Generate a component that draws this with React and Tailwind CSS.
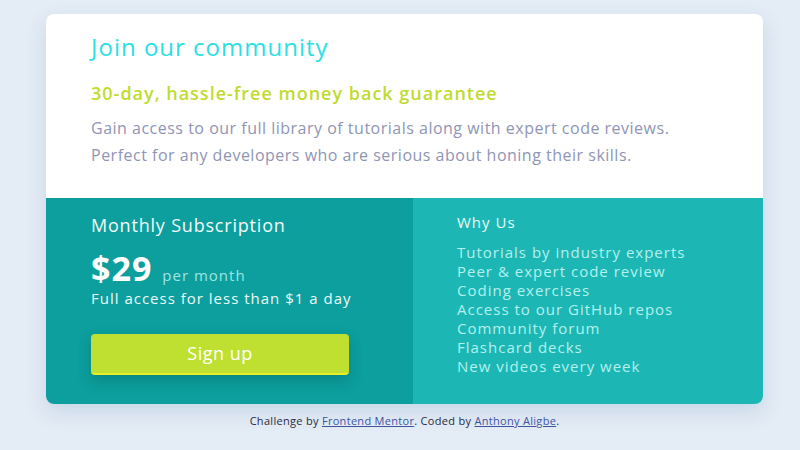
export default function App() {
  const reasons = [
    "Tutorials by industry experts",
    "Peer & expert code review",
    "Coding exercises",
    "Access to our GitHub repos",
    "Community forum",
    "Flashcard decks",
    "New videos every week",
  ]

  return (
    <div
      className="min-h-[450px] bg-[#e4ecf5] pt-[14px] pl-[9px] flex flex-col items-center"
      style={{ fontFamily: '"Open Sans", "Noto Sans", sans-serif' }}
    >
      <main className="w-[717px] rounded-lg overflow-hidden bg-white shadow-[0_8px_20px_rgba(74,120,170,0.18)]">
        <section className="px-[45px] pt-[17px] pb-[29px]">
          <h1 className="text-[24px] leading-8 font-medium tracking-[1px] text-[#2ae0e4]">Join our community</h1>
          <h2 className="mt-[18px] text-[18px] leading-6 font-semibold tracking-[1px] text-[#bfdb2f]">
            30-day, hassle-free money back guarantee
          </h2>
          <p className="mt-[10px] text-[16px] leading-[27px] tracking-[0.5px] text-[#8f95b5]">
            Gain access to our full library of tutorials along with expert code reviews.
            <br />
            Perfect for any developers who are serious about honing their skills.
          </p>
        </section>
        <div className="grid grid-cols-[367px_1fr]">
          <section className="bg-[#0c9f9d] px-[45px] pt-[15px] pb-[28px] text-white">
            <h3 className="text-[18px] leading-6 font-medium tracking-[0.8px] text-[#f4fbfb]">Monthly Subscription</h3>
            <div className="mt-[13px] h-9 flex items-baseline gap-[10px]">
              <span className="text-[34px] leading-9 font-bold tracking-[1px]">$29</span>
              <span className="text-[15px] tracking-[1px] text-[#9ee6e3]">per month</span>
            </div>
            <p className="mt-[2px] text-[15px] leading-5 tracking-[1px] text-[#eef8f8]">
              Full access for less than $1 a day
            </p>
            <button className="mt-[26px] w-[258px] h-[41px] rounded-[4px] bg-[#bfe030] border-b-2 border-[#e8f024] text-[18px] tracking-[0.5px] text-white shadow-[0_6px_14px_rgba(0,60,60,0.25)]">
              Sign up
            </button>
          </section>
          <section className="bg-[#1cb7b4] pl-[44px] pt-[14px] pb-[28px]">
            <h3 className="text-[15px] leading-5 font-medium tracking-[1px] text-[#eafafa]">Why Us</h3>
            <ul className="mt-[11px] text-[15px] leading-[19px] tracking-[1px] text-[#b3f0ee]">
              {reasons.map((r) => (
                <li key={r}>{r}</li>
              ))}
            </ul>
          </section>
        </div>
      </main>
      <p className="mt-[9px] text-[11px] tracking-[0.3px] text-[#2a2a40]">
        Challenge by{" "}
        <a href="#" className="underline text-[#3e52a3]">Frontend Mentor</a>. Coded by{" "}
        <a href="#" className="underline text-[#3e52a3]">Anthony Aligbe</a>.
      </p>
    </div>
  )
}
